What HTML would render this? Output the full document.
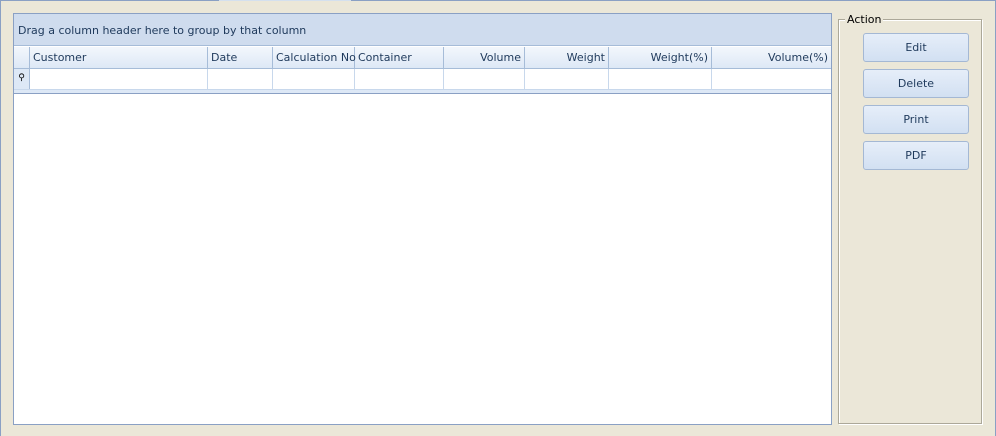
<!DOCTYPE html><html><head><style>
body{margin:0;width:996px;height:436px;background:#ebe7d8;position:relative;overflow:hidden;font-family:Tahoma,"DejaVu Sans","Liberation Sans",sans-serif;font-size:11px;color:#1e395b}
.a{position:absolute}
.c{position:absolute;top:0;height:21px;line-height:21px;border-right:1px solid #a6bcd8;padding:0 3px;box-sizing:border-box;white-space:nowrap}
.f{position:absolute;top:0;height:20px;border-right:1px solid #c8d8ec;box-sizing:border-box}
.b{position:absolute;left:863px;width:106px;height:29px;box-sizing:border-box;border:1px solid #a4b8d4;border-radius:3px;background:linear-gradient(#e6eef9,#d2e0f2);text-align:center;line-height:27px;color:#1e395b}
</style></head><body>
<div class="a" style="left:0;top:0;width:996px;height:1px;background:#8aa0c4"></div>
<div class="a" style="left:219px;top:0;width:132px;height:1px;background:#d4e0ee"></div>
<div class="a" style="left:0;top:0;width:1px;height:436px;background:#8aa0c4"></div>
<div class="a" style="left:995px;top:0;width:1px;height:436px;background:#8aa0c4"></div>
<div class="a" style="left:13px;top:13px;width:819px;height:412px;box-sizing:border-box;border:1px solid #8aa0c4;background:#fff">
<div class="a" style="left:0;top:0;width:817px;height:32px;background:#cfdcee;line-height:34px;padding-left:4px;box-sizing:border-box;border-bottom:1px solid #a6bcd8">Drag a column header here to group by that column</div>
<div class="a" style="left:0;top:33px;width:817px;height:21px;background:linear-gradient(#f3f7fc,#dde8f6);border-bottom:1px solid #a6bcd8">
<div class="c" style="left:0;width:16px"></div>
<div class="c" style="left:16px;width:178px">Customer</div>
<div class="c" style="left:194px;width:65px">Date</div>
<div class="c" style="left:259px;width:82px;text-align:right">Calculation No</div>
<div class="c" style="left:341px;width:89px">Container</div>
<div class="c" style="left:430px;width:81px;text-align:right">Volume</div>
<div class="c" style="left:511px;width:84px;text-align:right">Weight</div>
<div class="c" style="left:595px;width:103px;text-align:right">Weight(%)</div>
<div class="c" style="left:698px;width:119px;text-align:right;border-right:none">Volume(%)</div>
</div>
<div class="a" style="left:0;top:55px;width:817px;height:20px">
<div class="f" style="left:0;width:16px;background:#dde8f6;border-right:1px solid #a6bcd8;text-align:center;line-height:18px;font-size:9px;color:#000">&#9906;</div>
<div class="f" style="left:16px;width:178px"></div><div class="f" style="left:194px;width:65px"></div><div class="f" style="left:259px;width:82px"></div><div class="f" style="left:341px;width:89px"></div><div class="f" style="left:430px;width:81px"></div><div class="f" style="left:511px;width:84px"></div><div class="f" style="left:595px;width:103px"></div>
</div>
<div class="a" style="left:0;top:75px;width:817px;height:4px;background:#dde8f6;border-top:1px solid #c8d8ec"></div>
<div class="a" style="left:0;top:79px;width:817px;height:1px;background:#8aa0c4"></div>
</div>
<div class="a" style="left:838px;top:19px;width:144px;height:405px;box-sizing:border-box;border:1px solid #aca899;box-shadow:1px 1px 0 #fff inset,1px 1px 0 #fff"></div>
<div class="a" style="left:845px;top:13px;background:#ebe7d8;padding:0 2px;color:#000;line-height:13px">Action</div>
<div class="b" style="top:33px">Edit</div>
<div class="b" style="top:69px">Delete</div>
<div class="b" style="top:105px">Print</div>
<div class="b" style="top:141px">PDF</div>
</body></html>
